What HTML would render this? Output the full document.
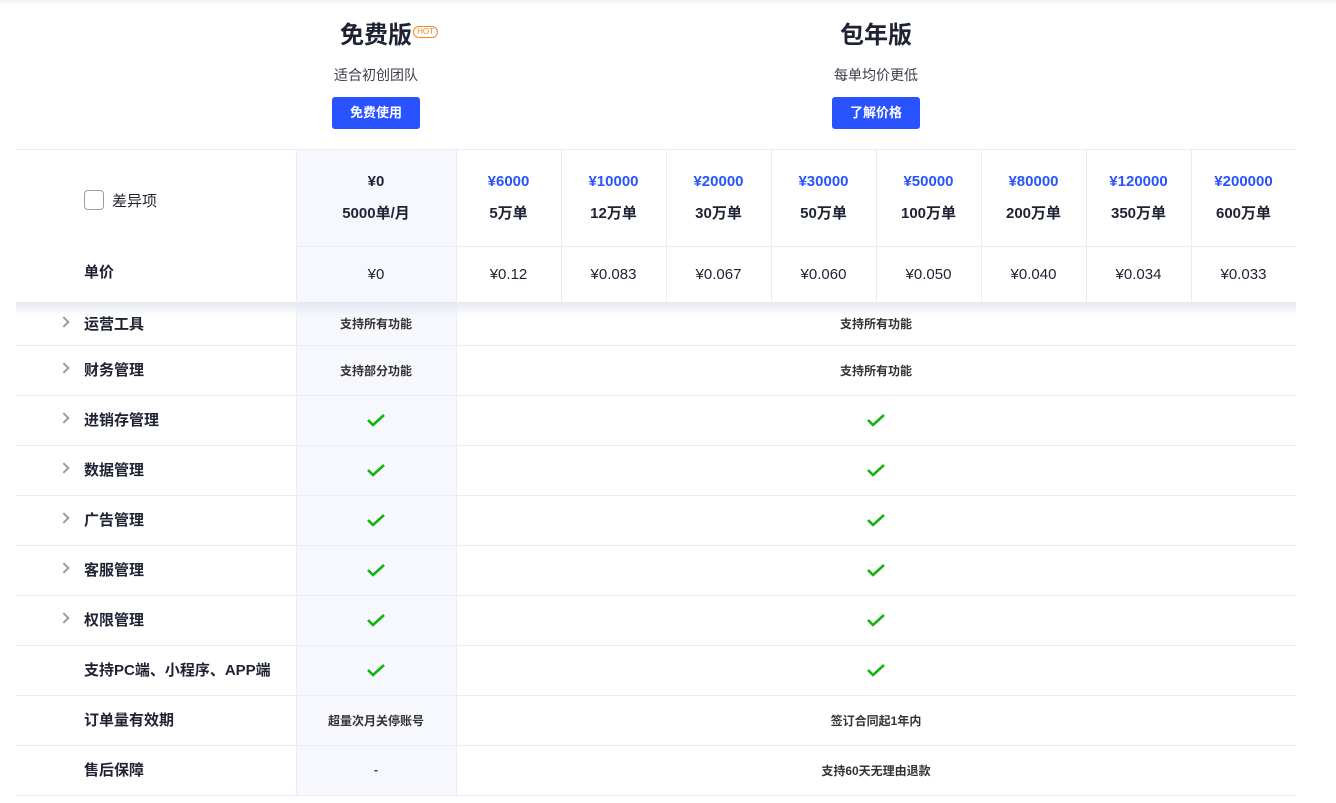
<!DOCTYPE html>
<html><head><meta charset="utf-8"><style>
*{margin:0;padding:0;box-sizing:border-box}
body{width:1336px;height:803px;overflow:hidden;background:#fff;font-family:"Liberation Sans","Noto Sans CJK SC",sans-serif;color:#1f2233;position:relative}
.topbar{position:absolute;left:0;top:0;width:1336px;height:5px;background:linear-gradient(#f1f2f6,#fff)}
.plan{position:absolute;top:0;width:200px;text-align:center}
.plan h2{font-size:24px;font-weight:bold;margin-top:20px;height:32px;line-height:32px;position:relative;display:inline-block}
.hot{position:absolute;right:-26px;top:6px;font-size:8px;color:#f08a24;border:1px solid #f08a24;border-radius:6px;padding:0 3px;line-height:10px;font-weight:normal}
.plan p{font-size:14px;color:#3a3d4a;margin-top:13px;line-height:20px}
.btn{display:inline-block;margin-top:12px;width:88px;height:32px;line-height:32px;background:#2953ff;color:#fff;font-size:13px;border-radius:3px;font-weight:bold}
.c{position:absolute;display:flex;align-items:center;justify-content:center;text-align:center}
.fc{background:#f7f8fd}
.hl{position:absolute;height:1px;background:#ebedf5;left:16px;width:1280px}
.vl{position:absolute;width:1px;background:#ebedf5}
.b{font-weight:bold;font-size:15px;line-height:32px}
.blue{color:#2953ff}
.lab{position:absolute;left:84px;font-size:15px;font-weight:bold}
.arr{position:absolute;left:60px;width:8px;height:8px;border-right:2px solid #9a9ca6;border-top:2px solid #9a9ca6;transform:rotate(45deg)}
.sm{font-size:12px;font-weight:bold;color:#333}
</style></head><body>
<div class="topbar"></div>
<div class="plan" style="left:276px"><h2>免费版<span class="hot">HOT</span></h2><p>适合初创团队</p><div class="btn">免费使用</div></div>
<div class="plan" style="left:776px"><h2>包年版</h2><p>每单均价更低</p><div class="btn">了解价格</div></div>

<div class="c fc" style="left:296px;top:150px;width:160px;height:645px"></div>
<div class="hl" style="top:149px"></div>
<div style="position:absolute;left:16px;top:302px;width:1280px;height:14px;background:linear-gradient(rgba(210,214,230,.55),rgba(255,255,255,0))"></div>

<div style="position:absolute;left:84px;top:190px;width:20px;height:20px;border:1px solid #9a9ca6;border-radius:4px;background:#fff"></div>
<div class="lab" style="top:190px;left:112px;font-weight:normal">差异项</div>
<div class="lab" style="top:261px">单价</div>

<div class="c b" style="left:296px;top:166px;width:160px;height:64px;flex-direction:column"><div>¥0</div><div>5000单/月</div></div>
<div class="c" style="left:296px;top:246px;width:160px;height:56px;font-size:15px">¥0</div>

<div id="cols"></div>
<script>
var p=["¥6000","¥10000","¥20000","¥30000","¥50000","¥80000","¥120000","¥200000"],q=["5万单","12万单","30万单","50万单","100万单","200万单","350万单","600万单"],u=["¥0.12","¥0.083","¥0.067","¥0.060","¥0.050","¥0.040","¥0.034","¥0.033"],h="";
for(var i=0;i<8;i++){var x=456+i*105;h+='<div class="c b" style="left:'+x+'px;top:166px;width:105px;height:64px;flex-direction:column"><div class="blue">'+p[i]+'</div><div>'+q[i]+'</div></div><div class="c" style="left:'+x+'px;top:246px;width:105px;height:56px;font-size:15px">'+u[i]+'</div>';if(i>0)h+='<div class="vl" style="left:'+x+'px;top:150px;height:152px"></div>';}
h+='<div class="vl" style="left:296px;top:150px;height:645px"></div><div class="vl" style="left:456px;top:150px;height:645px"></div><div class="hl" style="top:246px;left:296px;width:1000px"></div>';
var rows=[["运营工具",1,"支持所有功能","支持所有功能"],["财务管理",1,"支持部分功能","支持所有功能"],["进销存管理",1,"",""],["数据管理",1,"",""],["广告管理",1,"",""],["客服管理",1,"",""],["权限管理",1,"",""],["支持PC端、小程序、APP端",0,"",""],["订单量有效期",0,"超量次月关停账号","签订合同起1年内"],["售后保障",0,"-","支持60天无理由退款"]];
var ck='<svg width="20" height="14" viewBox="0 0 20 14"><path d="M2 7l5 5L18 2" fill="none" stroke="#12b312" stroke-width="2.6"/></svg>';
for(var r=0;r<10;r++){var t=r==0?302:345+(r-1)*50,hh=r==0?43:50,cy=t+hh/2;
h+='<div class="lab" style="top:'+(cy-11)+'px">'+rows[r][0]+'</div>';
if(rows[r][1])h+='<div class="arr" style="top:'+(cy-6)+'px"></div>';
h+='<div class="c sm" style="left:296px;top:'+t+'px;width:160px;height:'+hh+'px">'+(rows[r][2]||ck)+'</div>';
h+='<div class="c sm" style="left:456px;top:'+t+'px;width:840px;height:'+hh+'px">'+(rows[r][3]||ck)+'</div>';
h+='<div class="hl" style="top:'+(t+hh)+'px"></div>';}
document.getElementById("cols").innerHTML=h;
</script>
</body></html>
